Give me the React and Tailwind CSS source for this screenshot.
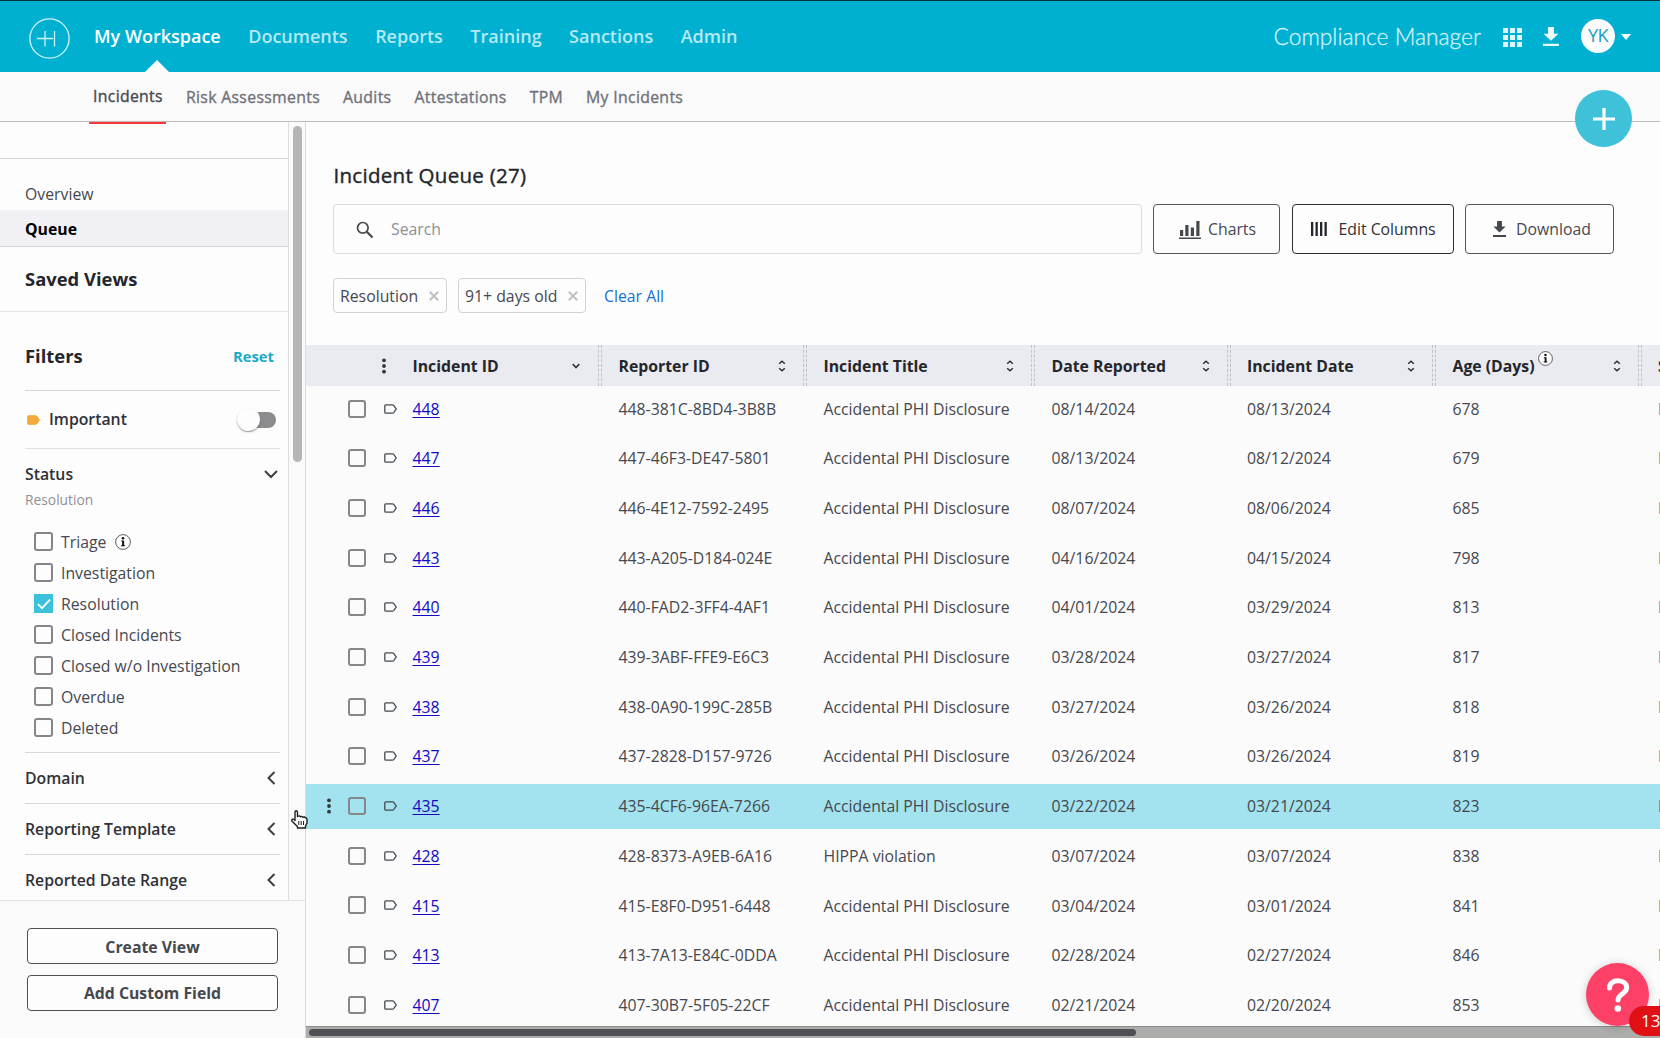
import React from 'react';

const NAV = ['My Workspace', 'Documents', 'Reports', 'Training', 'Sanctions', 'Admin'];
const TABS = ['Incidents', 'Risk Assessments', 'Audits', 'Attestations', 'TPM', 'My Incidents'];

const STATUSES = [
    { label: 'Triage', info: true },
    { label: 'Investigation' },
    { label: 'Resolution', checked: true },
    { label: 'Closed Incidents' },
    { label: 'Closed w/o Investigation' },
    { label: 'Overdue' },
    { label: 'Deleted' },
];

const COLUMNS = ['Reporter ID', 'Incident Title', 'Date Reported', 'Incident Date', 'Age (Days)'];

const INCIDENTS = [
    ['448', '448-381C-8BD4-3B8B', 'Accidental PHI Disclosure', '08/14/2024', '08/13/2024', '678'],
    ['447', '447-46F3-DE47-5801', 'Accidental PHI Disclosure', '08/13/2024', '08/12/2024', '679'],
    ['446', '446-4E12-7592-2495', 'Accidental PHI Disclosure', '08/07/2024', '08/06/2024', '685'],
    ['443', '443-A205-D184-024E', 'Accidental PHI Disclosure', '04/16/2024', '04/15/2024', '798'],
    ['440', '440-FAD2-3FF4-4AF1', 'Accidental PHI Disclosure', '04/01/2024', '03/29/2024', '813'],
    ['439', '439-3ABF-FFE9-E6C3', 'Accidental PHI Disclosure', '03/28/2024', '03/27/2024', '817'],
    ['438', '438-0A90-199C-285B', 'Accidental PHI Disclosure', '03/27/2024', '03/26/2024', '818'],
    ['437', '437-2828-D157-9726', 'Accidental PHI Disclosure', '03/26/2024', '03/26/2024', '819'],
    ['435', '435-4CF6-96EA-7266', 'Accidental PHI Disclosure', '03/22/2024', '03/21/2024', '823'],
    ['428', '428-8373-A9EB-6A16', 'HIPPA violation', '03/07/2024', '03/07/2024', '838'],
    ['415', '415-E8F0-D951-6448', 'Accidental PHI Disclosure', '03/04/2024', '03/01/2024', '841'],
    ['413', '413-7A13-E84C-0DDA', 'Accidental PHI Disclosure', '02/28/2024', '02/27/2024', '846'],
    ['407', '407-30B7-5F05-22CF', 'Accidental PHI Disclosure', '02/21/2024', '02/20/2024', '853'],
];

const ACTIVE_ID = '435';

// Shared by the header and the body so the columns line up
const GRID = 'grid w-[1460px] grid-cols-[292px_205px_228px_195.5px_205.5px_205.5px_128.5px]';

function DownloadIcon({ className }) {
    return (
        <svg viewBox="0 0 16 20" className={className} fill="currentColor" preserveAspectRatio="none">
            <path d="M5 0h6v7h4.5L8 14.5.5 7H5zM0 17.5h16V20H0z" />
        </svg>
    );
}

function InfoIcon({ className }) {
    return (
        <svg viewBox="0 0 16 16" className={className}>
            <circle cx="8" cy="8" r="7.4" fill="#fff" stroke="#333" strokeWidth="0.8" />
            <circle cx="8" cy="4.3" r="1.3" fill="#111" />
            <path d="M6.2 6.6h2.9v4.6h1v1H6v-1h1.1V7.6h-.9z" fill="#111" />
        </svg>
    );
}

function TagIcon({ className, fill = 'none', stroke = '#444a4f' }) {
    return (
        <svg viewBox="0 0 13 10" className={className}>
            <path d="M1.8.8h6.6q.8 0 1.3.6L12.2 5 9.7 8.6q-.5.6-1.3.6H1.8q-1 0-1-1V1.8q0-1 1-1z" fill={fill} stroke={stroke} strokeWidth="1.3" />
        </svg>
    );
}

function Kebab() {
    return (
        <svg viewBox="0 0 4 16" className="h-4 w-1" fill="#34383c">
            <circle cx="2" cy="2.3" r="1.9" />
            <circle cx="2" cy="8" r="1.9" />
            <circle cx="2" cy="13.7" r="1.9" />
        </svg>
    );
}

function SortIcon() {
    return (
        <svg viewBox="0 0 8 12" className="h-3 w-2" fill="none" stroke="#2b2f33" strokeWidth="1.5">
            <path d="M1.2 3.8 4 1.2l2.8 2.6M1.2 8.2 4 10.8l2.8-2.6" />
        </svg>
    );
}

function Chevron({ open }) {
    return (
        <svg viewBox="0 0 14 14" className="-mt-0.5 h-3.5 w-3.5" fill="none" stroke="#3b3f44" strokeWidth="2">
            <path d={open ? 'M1 4l6 6 6-6' : 'M10.5 1l-6 6 6 6'} />
        </svg>
    );
}

function Checkbox({ checked, className }) {
    if (checked) {
        return (
            <span className={`flex items-center justify-center bg-[#3bc1d9] ${className}`}>
                <svg viewBox="0 0 14 12" className="h-3 w-3.5" fill="none" stroke="#fff" strokeWidth="1.8">
                    <path d="M1 6.2l4 4L13 1.6" />
                </svg>
            </span>
        );
    }
    return <span className={`rounded-[3px] border-2 border-[#85858a] ${className}`} />;
}

function TopBar() {
    return (
        <header className="flex h-[72px] items-center border-t border-[#04343c] bg-[#00b0d0] px-[29px]">
            <svg viewBox="0 0 41 41" className="mt-[3px] h-[41px] w-[41px] shrink-0" fill="none" stroke="#d3f3fa">
                <circle cx="20.5" cy="20.5" r="19.6" strokeWidth="1.3" />
                <path d="M8 20.5h16M16 13v15.5M25.5 13v15.5" strokeWidth="1.3" />
            </svg>
            <nav className="ml-6 flex h-full items-center gap-[27.5px] text-[18px] font-semibold text-[#b5eaf4]">
                {NAV.map((item, i) => (
                    <a key={item} className={i === 0 ? 'relative flex h-full items-center text-white' : 'flex h-full items-center'}>
                        {item}
                        {i === 0 && (
                            <svg viewBox="0 0 24 12" className="absolute bottom-0 left-1/2 h-3 w-6 -translate-x-1/2" fill="#fcfcfd">
                                <path d="M0 12 12 0l12 12z" />
                            </svg>
                        )}
                    </a>
                ))}
            </nav>
            <span className="ml-auto font-[Lato] text-[22.8px] font-light text-[#d2f3f9] [-webkit-text-stroke:0.3px]">Compliance Manager</span>
            <svg viewBox="0 0 19 19" className="ml-[22px] mt-0.5 h-[19px] w-[19px]" fill="#dff7fb">
                {[0, 7, 14].map((y) => [0, 7, 14].map((x) => <rect key={`${x}-${y}`} x={x} y={y} width="5" height="5" />))}
            </svg>
            <DownloadIcon className="ml-[21px] h-[19px] w-4 text-[#e8fafc]" />
            <span className="-mt-0.5 ml-[22px] mr-1.5 flex h-[34px] w-[34px] items-center justify-center rounded-full bg-[#fdfdfe] text-[18px] tracking-tight text-[#179fb9]">YK</span>
            <svg viewBox="0 0 10 6" className="h-1.5 w-2.5" fill="#fff">
                <path d="M0 0h10L5 6z" />
            </svg>
        </header>
    );
}

function SubNav() {
    return (
        <nav className="flex h-[50px] items-center gap-[23px] border-b border-[#bbbbbc] bg-[#fafafb] pl-[93px] text-[15.8px] tracking-[0.32px] text-[#707278] [-webkit-text-stroke:0.35px]">
            {TABS.map((tab, i) => (
                <a key={tab} className={i === 0 ? 'relative flex h-full items-center pt-px text-[#46484e]' : 'flex h-full items-center pt-[3px]'}>
                    {tab}
                    {i === 0 && <span className="absolute -left-1 -right-[3px] -bottom-[3px] h-0.5 bg-[#f9363a]" />}
                </a>
            ))}
        </nav>
    );
}

function FilterSection({ title }) {
    return (
        <div className="flex h-[51px] items-center justify-between border-t border-[#d8d8dc] pr-0.5 pt-0.5 text-[15.8px] font-semibold text-[#2f3136]">
            {title}
            <Chevron />
        </div>
    );
}

function Sidebar() {
    return (
        <aside className="flex w-[306px] shrink-0 flex-col border-r border-[#dadade] bg-[#fafafb]">
            <div className="flex h-[779px] border-b border-[#e2e2e4]">
                <div className="w-[289px] shrink-0 overflow-hidden border-r border-[#dedee2] bg-[#fdfdfe]">
                    <div className="h-[37px] border-b border-[#d5d5da]" />
                    <div className="flex h-[51px] items-end pb-[3px] pl-[25px] text-[15.8px] text-[#46484e]">Overview</div>
                    <div className="flex h-[37px] items-center border-b border-[#d5d5da] bg-[#f1f1f5] pl-[25px] pt-[3px] text-[15.8px] font-bold text-black">Queue</div>
                    <div className="flex h-[65px] items-center border-b border-[#e4e4e8] pl-[25px] text-[18.4px] font-bold text-[#24262b]">Saved Views</div>
                    <div className="ml-[25px] w-[255px]">
                        <div className="flex h-[79px] items-center justify-between border-b border-[#d5d5da] pr-1.5 pt-2.5">
                            <span className="text-[18.4px] font-bold text-[#24262b]">Filters</span>
                            <span className="text-[14.8px] font-bold text-[#1aaac5]">Reset</span>
                        </div>
                        <div className="flex h-[58px] items-center border-b border-[#e2e2e4]">
                            <TagIcon className="ml-0.5 h-2.5 w-[13px]" fill="#f2a93b" stroke="#f2a93b" />
                            <span className="ml-[9px] pt-px text-[15.8px] font-semibold text-[#2f3136]">Important</span>
                            <span className="ml-auto mr-1 flex h-4 w-[34px] items-center rounded-full bg-[#8c8c8e]">
                                <span className="-ml-[5px] h-[23px] w-[23px] shrink-0 rounded-full bg-[#fdfdfe] shadow-[0_1px_1.5px_rgba(0,0,0,0.4)]" />
                            </span>
                        </div>
                        <div className="h-[303px] pt-[11px]">
                            <div className="flex h-7 items-center justify-between pr-0.5 pt-0.5 text-[15.8px] font-semibold text-[#2f3136]">
                                Status
                                <Chevron open />
                            </div>
                            <div className="flex h-[23px] items-center pt-px text-[13.8px] text-[#8f9197]">Resolution</div>
                            <ul className="mt-[15px]">
                                {STATUSES.map((s) => (
                                    <li key={s.label} className="flex h-[31px] items-center pl-[9px] text-[15.8px] text-[#46484e]">
                                        <Checkbox checked={s.checked} className="h-[19px] w-[19px]" />
                                        <span className="ml-2 pt-0.5">{s.label}</span>
                                        {s.info && <InfoIcon className="ml-[9px] h-4 w-4" />}
                                    </li>
                                ))}
                            </ul>
                        </div>
                        <FilterSection title="Domain" />
                        <FilterSection title="Reporting Template" />
                        <FilterSection title="Reported Date Range" />
                    </div>
                </div>
                <div className="w-4 pl-1 pt-1">
                    <div className="h-[336px] w-[9px] rounded-full bg-[#b5b5b6]" />
                </div>
            </div>
            <div className="flex flex-col gap-[11px] pl-[27px] pt-[27px] text-[15.8px] font-bold text-[#46484e]">
                <button className="h-9 w-[251px] rounded-sm border border-[#4d4f54] bg-[#fdfdfe] pt-[3px]">Create View</button>
                <button className="h-9 w-[251px] rounded-sm border border-[#4d4f54] bg-[#fdfdfe] pt-0.5">Add Custom Field</button>
            </div>
        </aside>
    );
}

function Toolbar() {
    return (
        <div className="flex h-[50px] pl-[27px] text-[15.8px]">
            <div className="flex w-[809px] items-center rounded border border-[#dcdce0] pl-[22px]">
                <svg viewBox="0 0 18 18" className="mt-px h-[18px] w-[18px]" fill="none" stroke="#45484d" strokeWidth="1.7">
                    <circle cx="6.8" cy="6.8" r="5.3" />
                    <path d="M10.8 10.8 16.5 16.5" strokeWidth="2.2" />
                </svg>
                <span className="ml-[17px] pt-0.5 text-[#8d8f94]">Search</span>
            </div>
            <button className="ml-[11px] flex w-[127px] items-center rounded border border-[#55575c] pl-[25px] text-[#46484e]">
                <svg viewBox="0 0 22 19" className="h-[19px] w-[22px]" fill="#45484d">
                    <path d="M0 17.5h22V19H0zM1 10h3.2v6H1zM6.3 5h3.2v11H6.3zM11.8 7.5H15V16h-3.2zM17.3 1h3.2v15h-3.2z" />
                </svg>
                <span className="ml-[7px] pt-0.5">Charts</span>
            </button>
            <button className="ml-[11.5px] flex w-[162px] items-center rounded border border-[#2b2d31] pl-[18px] text-[#2f3136]">
                <svg viewBox="0 0 16 14" className="h-3.5 w-4" fill="#24262b">
                    <path d="M0 0h2.3v14H0zM4.5 0h2.3v14H4.5zM9 0h2.3v14H9zM13.5 0h2.3v14h-2.3z" />
                </svg>
                <span className="ml-3 pt-0.5">Edit Columns</span>
            </button>
            <button className="ml-[11.5px] flex w-[149px] items-center rounded border border-[#55575c] pl-[27px] text-[#46484e]">
                <DownloadIcon className="h-4 w-[13px] text-[#45484d]" />
                <span className="ml-2.5 pt-0.5">Download</span>
            </button>
        </div>
    );
}

function Chip({ label, width }) {
    return (
        <span className={`flex h-[35px] items-center justify-between rounded-sm border border-[#d2d2d6] pl-1.5 pr-[7px] text-[#46484e] ${width}`}>
            <span className="pt-0.5">{label}</span>
            <svg viewBox="0 0 10 10" className="h-2.5 w-2.5" stroke="#c3c3c6" strokeWidth="2.2">
                <path d="M.8.8l8.4 8.4M9.2.8.8 9.2" />
            </svg>
        </span>
    );
}

function IncidentTable() {
    return (
        <div className="mt-8 flex-1 overflow-hidden bg-[#fbfbfc]">
            <div className={`${GRID} h-[41px] bg-[#e9ebf1] text-[15.8px] font-bold text-[#24262b]`}>
                <div className="flex items-center pl-[75.5px]">
                    <Kebab />
                    <span className="ml-[27px] pt-0.5">Incident ID</span>
                    <svg viewBox="0 0 8 6" className="ml-auto mr-[18px] h-1.5 w-2" fill="none" stroke="#2b2f33" strokeWidth="1.5">
                        <path d="M.7 1 4 4.6 7.3 1" />
                    </svg>
                </div>
                {COLUMNS.map((col) => (
                    <div key={col} className="flex items-center">
                        <span className="h-full w-1 border-x border-dashed border-[#bfc0c8]" />
                        <span className="ml-[16.5px] pt-0.5">{col}</span>
                        {col === 'Age (Days)' && <InfoIcon className="mb-[15px] ml-[3px] h-[15px] w-[15px]" />}
                        <span className="ml-auto mr-[17px]">
                            <SortIcon />
                        </span>
                    </div>
                ))}
                <div className="flex items-center">
                    <span className="h-full w-1 border-x border-dashed border-[#bfc0c8]" />
                    <span className="ml-[16.5px] pt-0.5">Source</span>
                </div>
            </div>
            <div className="flex flex-col gap-[4.7px]">
                {INCIDENTS.map(([id, ...cells]) => (
                    <div key={id} className={`${GRID} h-[45px] shrink-0 items-center text-[15.8px] text-[#46484e] ${id === ACTIVE_ID ? 'bg-[#a2e3ef]' : ''}`}>
                        <div className="flex items-center">
                            <span className="ml-[21px] w-[21px]">{id === ACTIVE_ID && <Kebab />}</span>
                            <Checkbox className="h-[18px] w-[18px]" />
                            <TagIcon className="ml-[18px] h-2.5 w-[13px]" />
                            <a className="ml-[15.5px] pt-0.5 text-[#1208c4] underline underline-offset-2">{id}</a>
                        </div>
                        {cells.map((cell, i) => (
                            <span key={i} className="pl-[20.5px] pt-0.5">{cell}</span>
                        ))}
                        <span className="pl-[20.5px] pt-0.5">Email</span>
                    </div>
                ))}
            </div>
        </div>
    );
}

export default function App() {
    return (
        <div className="relative flex h-[1038px] w-[1660px] flex-col overflow-hidden bg-[#fdfdfe] font-['Open_Sans','Noto_Sans',sans-serif]">
            <TopBar />
            <SubNav />
            <div className="flex min-h-0 flex-1">
                <Sidebar />
                <main className="flex min-w-0 flex-1 flex-col">
                    <h1 className="flex h-[82px] items-end pb-3.5 pl-[27.5px] text-[20.5px] leading-[30px] tracking-[0.28px] text-[#24262b] [-webkit-text-stroke:0.4px]">Incident Queue (27)</h1>
                    <Toolbar />
                    <div className="mt-6 flex items-center pl-[27px] text-[15.8px]">
                        <Chip label="Resolution" width="w-[114px]" />
                        <span className="w-[11px]" />
                        <Chip label="91+ days old" width="w-[128px]" />
                        <a className="ml-[18px] pt-0.5 text-[#1670d2]">Clear All</a>
                    </div>
                    <IncidentTable />
                    <div className="flex h-3 items-center border-t border-[#8c8c8c] bg-[#adadac] pl-[3px]">
                        <div className="h-[7px] w-[827px] rounded-full bg-[#505054]" />
                    </div>
                </main>
            </div>

            {/* Floating add button */}
            <button className="absolute left-[1575px] top-[90px] flex h-[57px] w-[57px] items-center justify-center rounded-full bg-[#3ec1d9]">
                <svg viewBox="0 0 22 22" className="h-[22px] w-[22px]" fill="#fff">
                    <path d="M9.4 0h3.2v9.4H22v3.2h-9.4V22H9.4v-9.4H0V9.400h9.400z" />
                </svg>
            </button>

            {/* Help launcher with unread count */}
            <button className="absolute left-[1586px] top-[963px] flex h-[63px] w-[63px] items-center justify-center rounded-full bg-[#fc4066] shadow-[0_1px_8px_rgba(0,0,0,0.2)]">
                <svg viewBox="0 0 24 34" className="h-[34px] w-6" fill="none" stroke="#fff" strokeWidth="5" strokeLinecap="round" strokeLinejoin="round">
                    <path d="M3.5 10C3.5 5.5 7 2.8 12 2.8s8.7 2.9 8.7 7c0 5.8-8.7 6-8.7 12.2" />
                    <circle cx="11.8" cy="30.5" r="3.3" fill="#fff" stroke="none" />
                </svg>
            </button>
            <span className="absolute left-[1629px] top-[1006px] flex h-[30px] w-[50px] items-center rounded-full bg-[#e01014] pl-3 text-[17px] font-medium text-white">13</span>

            {/* Pointer */}
            <svg viewBox="0 0 17 19" className="absolute left-[291px] top-[810px] h-[19px] w-[17px]" fill="#fff" stroke="#1d1d1f" strokeWidth="1.4" strokeLinejoin="round">
                <path d="M4 9.5V2.2Q4 .8 5.2.8T6.5 2.2V6.5Q8.5 5.2 9.3 6.8 11 5.7 12 7.4 13.7 6.5 14.5 7.8 16 8 16 9.5V13l-1.5 3v2H6.5v-1.5L1.3 11.5Q.3 10 1.5 9.2 2.8 8.8 4 10.5z" />
                <path d="M7.8 11v4M10.2 11v4M12.5 11v4" strokeWidth="1" />
            </svg>
        </div>
    );
}
